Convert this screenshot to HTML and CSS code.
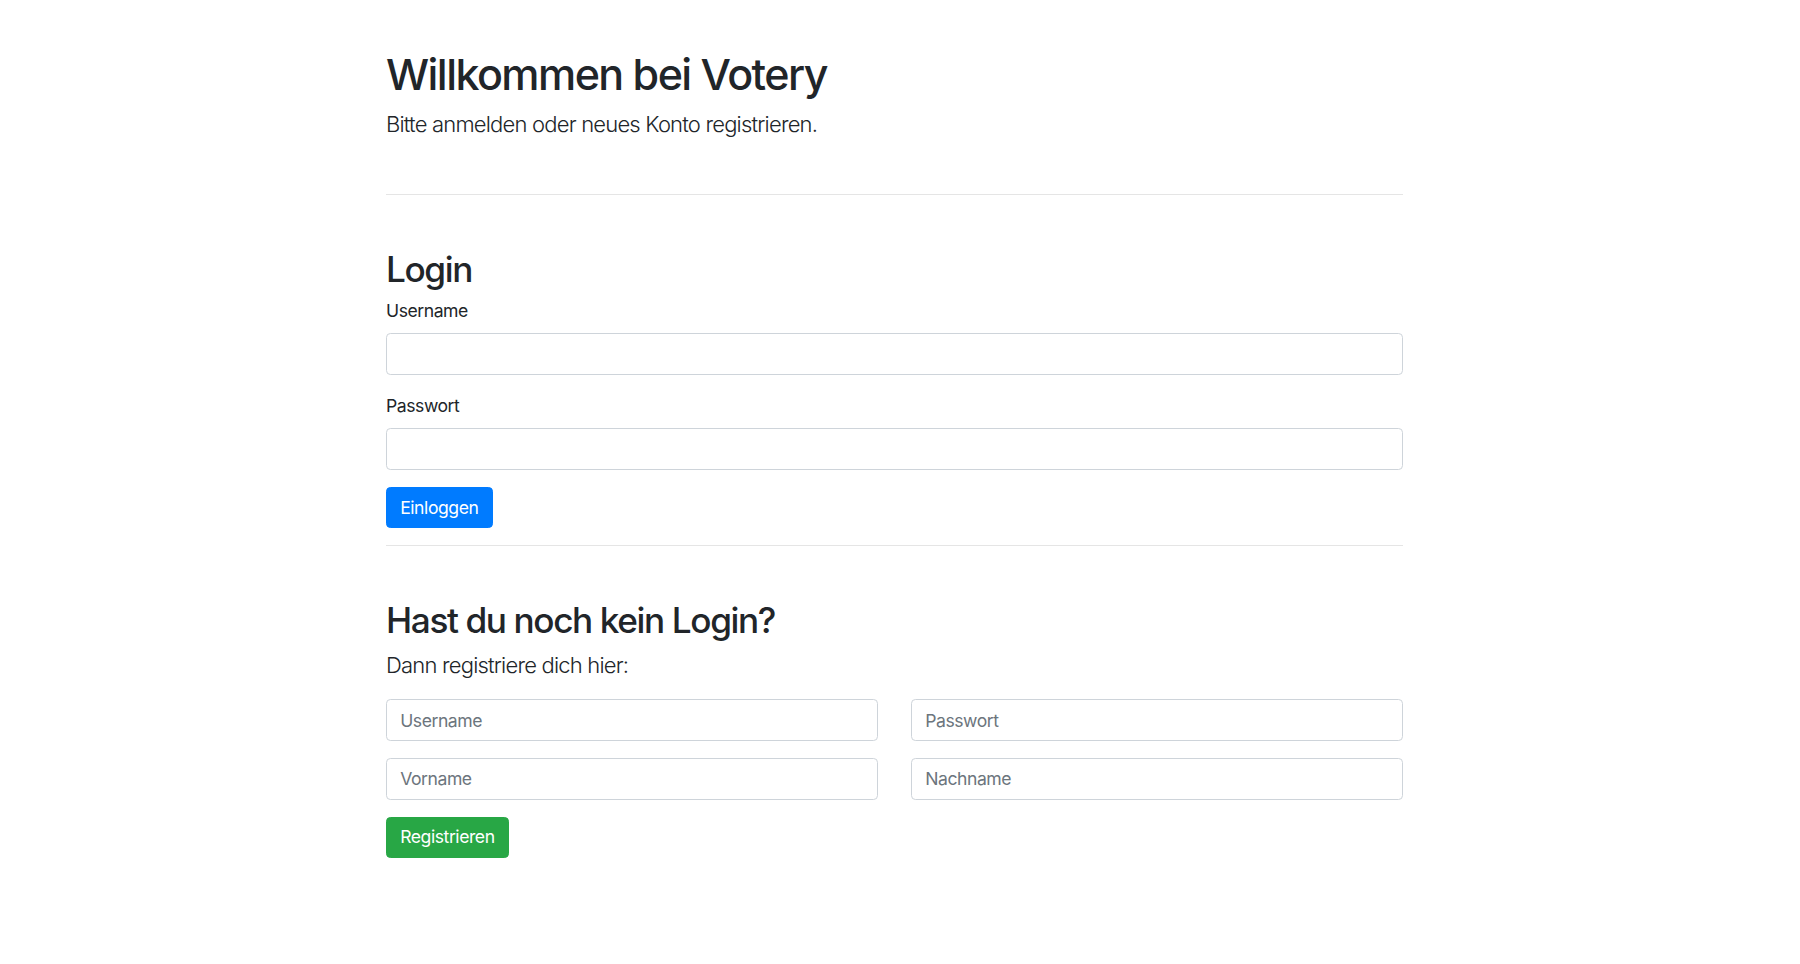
FILE: index.html
```html
<!DOCTYPE html>
<html lang="de">
<head>
<meta charset="utf-8">
<title>Votery</title>
<link rel="stylesheet" href="styles.css">
</head>
<body>
<div class="container">
  <header class="intro">
    <h1 class="title">Willkommen bei Votery</h1>
    <p class="lead">Bitte anmelden oder neues Konto registrieren.</p>
  </header>
  <hr class="divider">
  <section class="section">
    <h2 class="section-title">Login</h2>
    <form class="form">
      <div class="form-group">
        <label class="label" for="login-user">Username</label>
        <input class="input" id="login-user" type="text">
      </div>
      <div class="form-group">
        <label class="label" for="login-pass">Passwort</label>
        <input class="input" id="login-pass" type="password">
      </div>
      <button class="btn btn-primary" type="button">Einloggen</button>
    </form>
  </section>
  <hr class="divider divider-small">
  <section class="section">
    <h2 class="section-title">Hast du noch kein Login?</h2>
    <p class="lead lead-spaced">Dann registriere dich hier:</p>
    <form class="form">
      <div class="grid">
        <input class="input input-reg" type="text" placeholder="Username">
        <input class="input input-reg" type="password" placeholder="Passwort">
        <input class="input input-reg" type="text" placeholder="Vorname">
        <input class="input input-reg" type="text" placeholder="Nachname">
      </div>
      <button class="btn btn-success" type="button">Registrieren</button>
    </form>
  </section>
</div>
</body>
</html>
```
FILE: styles.css
```css
* { box-sizing: border-box; }
html, body { margin: 0; padding: 0; background: #fff; }
body {
  font-family: Inter, "Noto Sans", "Liberation Sans", sans-serif;
  font-size: 17.6px;
  line-height: 26.4px;
  letter-spacing: -0.45px;
  color: #212529;
  padding-right: 11px;
}
.container {
  width: 1017px;
  margin: 0 auto;
  padding-top: 47.6px;
  padding-bottom: 60px;
}
.title {
  margin: 0 0 7.5px;
  font-size: 43px;
  line-height: 52.8px;
  font-weight: 500;
  letter-spacing: -1.55px;
}
.lead {
  margin: 0;
  font-size: 22px;
  line-height: 33px;
  font-weight: 300;
  letter-spacing: -0.8px;
}
.lead-spaced { margin-bottom: 17.2px; }
.divider {
  margin: 53px 0 0;
  border: 0;
  border-top: 1px solid rgba(0,0,0,.1);
  height: 0;
}
.divider-small { margin-top: 16.6px; }
.section { padding-top: 52.8px; }
.section-title {
  margin: 0 0 8.3px;
  font-size: 35.2px;
  line-height: 42.2px;
  font-weight: 500;
  letter-spacing: -1.4px;
}
.form { margin: 0; }
.form-group { margin-bottom: 17.6px; }
.label {
  display: block;
  margin-bottom: 8.8px;
  line-height: 26.4px;
}
.input {
  display: block;
  width: 100%;
  height: 41.8px;
  padding: 0 13.2px;
  font-family: inherit;
  font-size: 17.6px;
  letter-spacing: -0.45px;
  color: #495057;
  background: #fff;
  border: 1px solid #ced4da;
  border-radius: 4.4px;
  outline: none;
}
.input-reg { height: 41.3px; }
.input::placeholder { color: #6c757d; opacity: 1; }
.grid {
  display: grid;
  grid-template-columns: 1fr 1fr;
  column-gap: 33px;
  row-gap: 17.6px;
  margin-bottom: 17.2px;
}
.btn {
  display: inline-block;
  height: 41px;
  padding: 0 13.2px;
  font-family: inherit;
  font-size: 17.6px;
  line-height: 26.4px;
  letter-spacing: -0.45px;
  color: #fff;
  border: 1px solid transparent;
  border-radius: 4.4px;
  cursor: pointer;
}
.btn-primary { background: #007bff; border-color: #007bff; }
.btn-success { background: #28a745; border-color: #28a745; }
```
